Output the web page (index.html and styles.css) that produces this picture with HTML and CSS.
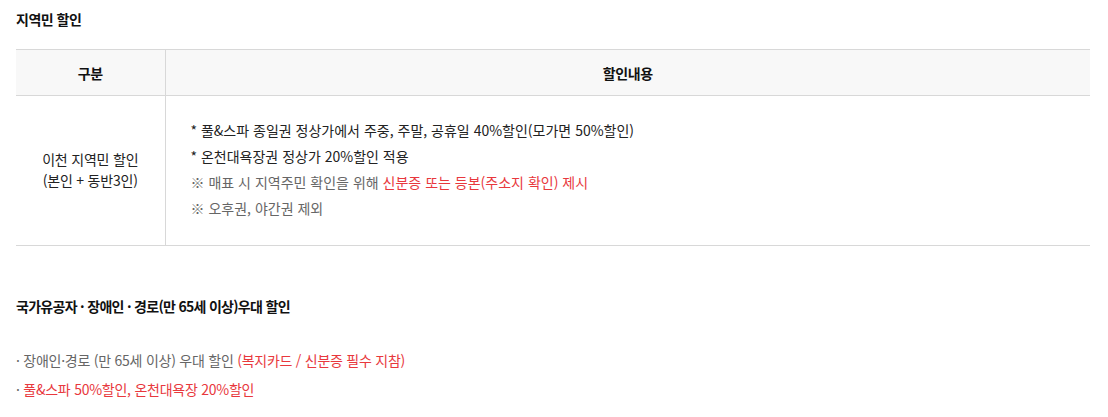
FILE: index.html
```html
<!DOCTYPE html>
<html lang="ko">
<head>
<meta charset="utf-8">
<link rel="stylesheet" href="styles.css">
</head>
<body>
<div class="wrap">
  <h3 class="title">지역민 할인</h3>
  <table class="tbl">
    <colgroup><col class="c1"><col class="c2"></colgroup>
    <thead>
      <tr><th>구분</th><th>할인내용</th></tr>
    </thead>
    <tbody>
      <tr>
        <td class="cat">이천 지역민 할인<br>(본인 + 동반3인)</td>
        <td class="desc">
          <p>* 풀&amp;스파 종일권 정상가에서 주중, 주말, 공휴일 40%할인(모가면 50%할인)</p>
          <p>* 온천대욕장권 정상가 20%할인 적용</p>
          <p class="note">※ 매표 시 지역주민 확인을 위해 <span class="red">신분증 또는 등본(주소지 확인) 제시</span></p>
          <p class="note">※ 오후권, 야간권 제외</p>
        </td>
      </tr>
    </tbody>
  </table>
  <h3 class="title title2">국가유공자 · 장애인 · 경로(만 65세 이상)우대 할인</h3>
  <ul class="list">
    <li>· 장애인·경로 (만 65세 이상) 우대 할인 <span class="red">(복지카드 / 신분증 필수 지참)</span></li>
    <li>· <span class="red">풀&amp;스파 50%할인, 온천대욕장 20%할인</span></li>
  </ul>
</div>
</body>
</html>
```

FILE: styles.css
```css
* { box-sizing: border-box; }
body {
  margin: 0;
  background: #fff;
  font-family: "Noto Sans CJK KR", "Noto Sans", sans-serif;
  color: #222;
}
.wrap {
  padding: 0 18px 0 16px;
}
.title {
  margin: 0;
  padding-top: 9px;
  font-size: 14px;
  line-height: 20px;
  font-weight: 700;
  letter-spacing: -0.5px;
  color: #111;
}
.tbl {
  width: 100%;
  margin-top: 20px;
  border-collapse: collapse;
  border-top: 1px solid #d8d8d8;
  font-size: 14px;
  letter-spacing: -0.2px;
}
.c1 { width: 149px; }
.tbl th {
  height: 46px;
  background: #f8f8f8;
  border-bottom: 1px solid #d8d8d8;
  font-weight: 700;
  color: #111;
  text-align: center;
  padding: 0;
  letter-spacing: -0.4px;
}
.tbl th + th, .tbl td + td {
  border-left: 1px solid #d8d8d8;
}
.tbl td {
  border-bottom: 1px solid #d8d8d8;
  padding: 0;
  height: 150px;
}
.cat {
  text-align: center;
  line-height: 21px;
  color: #222;
  padding-bottom: 2px !important;
}
.desc {
  padding: 0 0 3px 25px !important;
  letter-spacing: 0;
}
.desc p {
  margin: 0;
  line-height: 26px;
  color: #222;
}
.desc p.note { color: #666; }
.red { color: #e8383d; }
.title2 {
  padding-top: 50px;
  letter-spacing: -0.7px;
}
.list {
  list-style: none;
  margin: 0;
  padding: 30px 0 0 0;
  font-size: 14px;
  letter-spacing: -0.25px;
  color: #666;
}
.list li {
  line-height: 29px;
}
```
